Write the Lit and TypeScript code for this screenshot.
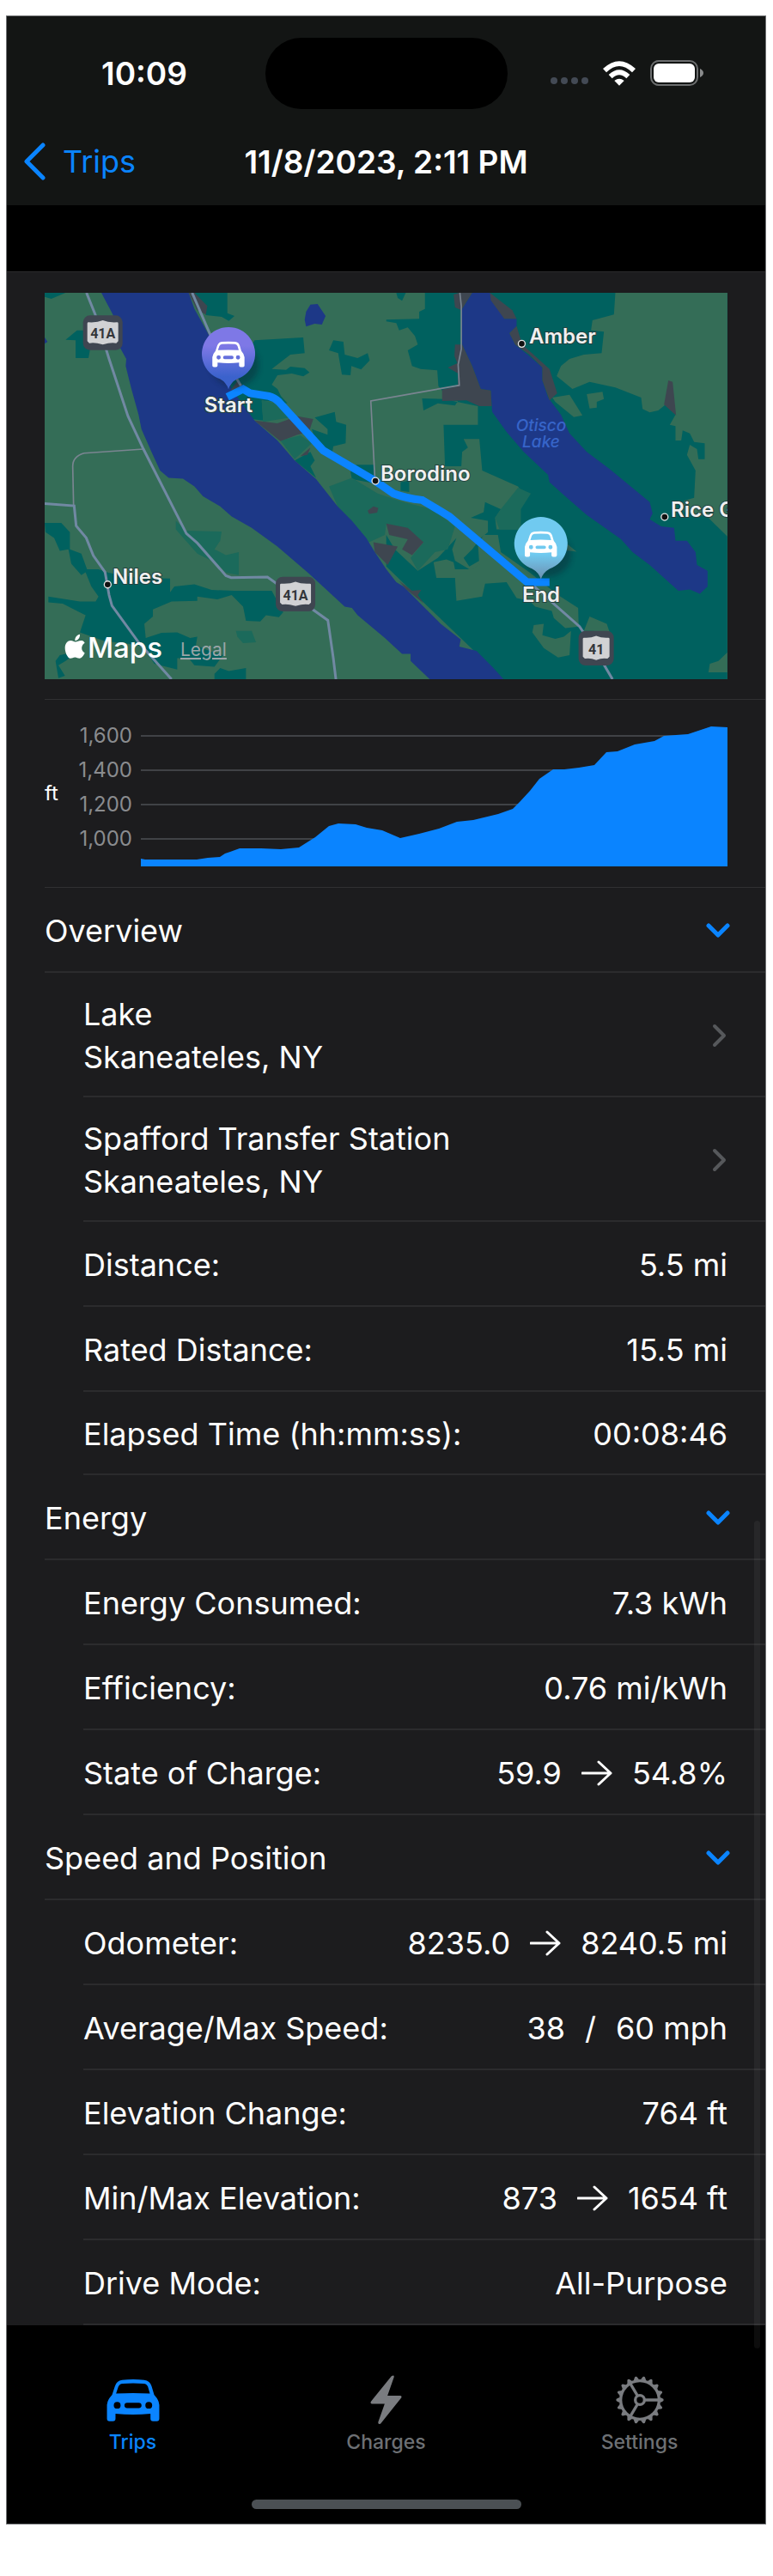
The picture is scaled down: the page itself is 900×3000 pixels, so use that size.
import { css, html, LitElement, nothing, svg } from "lit";
import { customElement, property, state } from "lit/decorators.js";

interface Detail {
  label: string;
  from?: string;
  separator?: "arrow" | "slash";
  value: string;
  compact?: boolean;
}

interface Place {
  name: string;
  city: string;
}

const places: Place[] = [
  { name: "Lake", city: "Skaneateles, NY" },
  { name: "Spafford Transfer Station", city: "Skaneateles, NY" },
];

const overview: Detail[] = [
  { label: "Distance:", value: "5.5 mi" },
  { label: "Rated Distance:", value: "15.5 mi" },
  { label: "Elapsed Time (hh:mm:ss):", value: "00:08:46", compact: true },
];

const energy: Detail[] = [
  { label: "Energy Consumed:", value: "7.3 kWh" },
  { label: "Efficiency:", value: "0.76 mi/kWh" },
  { label: "State of Charge:", from: "59.9", separator: "arrow", value: "54.8%" },
];

const speed: Detail[] = [
  { label: "Odometer:", from: "8235.0", separator: "arrow", value: "8240.5 mi" },
  { label: "Average/Max Speed:", from: "38", separator: "slash", value: "60 mph" },
  { label: "Elevation Change:", value: "764 ft" },
  { label: "Min/Max Elevation:", from: "873", separator: "arrow", value: "1654 ft" },
  { label: "Drive Mode:", value: "All-Purpose" },
];

const carPath =
  "M1 90Q2 72 19 54L29 24Q35 4 54 2Q93-2 132 2Q152 4 158 24L167 54Q184 72 185 90V138Q185 147 176 147H163Q154 147 154 138V121Q93 127 31 121V138Q31 147 22 147H10Q1 147 1 138Z" +
  "M33 50L41 26Q45 16 56 15Q93 12 130 15Q141 16 145 26L152 50Q93 46 33 50Z" +
  "M25 91a12 12 0 1 0 24 0a12 12 0 1 0-24 0Z" +
  "M136 91a12 12 0 1 0 24 0a12 12 0 1 0-24 0Z" +
  "M72 82H113a9 9 0 0 1 0 19H72a9 9 0 0 1 0-19Z";

// 18 teeth around the ring
const gearTeeth = Array.from({ length: 18 }, (_, i) => i * 20);

@customElement("elevation-chart")
class ElevationChart extends LitElement {
  ticks = ["1,600", "1,400", "1,200", "1,000"];

  // profile samples as x, y pairs in plot units
  profile = [
    [0, 163], [5, 164], [65, 164], [78, 162], [92, 161], [98, 157], [104, 155], [115, 151],
    [140, 151], [163, 152], [184, 150], [203, 138], [219, 125], [230, 122], [250, 123], [263, 127],
    [281, 130], [302, 139], [324, 134], [347, 128], [368, 120], [387, 118], [416, 111], [433, 105],
    [441, 97], [453, 84], [464, 70], [480, 59], [493, 59], [510, 57], [528, 54], [542, 39],
    [555, 38], [575, 30], [598, 26], [609, 20], [637, 18], [664, 9], [683, 10],
  ];

  render() {
    const area = this.profile.map(([x, y]) => `${x},${y}`).join(" ");
    return html`
      <span class="unit">ft</span>
      <div class="ticks">${this.ticks.map((tick) => html`<span>${tick}</span>`)}</div>
      <svg viewBox="0 0 683 172" preserveAspectRatio="none" aria-label="Elevation">
        ${[20, 60, 100, 140].map((y) => svg`<path class="grid" d="M0 ${y}H683" />`)}
        <polygon class="area" points="0,172 ${area} 683,172" />
      </svg>
    `;
  }

  static styles = css`
    :host {
      display: flex;
      align-items: center;
      padding: 22px 45px 24px 0;
    }

    .unit {
      width: 36px;
      font-size: 24px;
    }

    .ticks {
      display: flex;
      flex-direction: column;
      width: 66px;
      margin-right: 10px;
      padding-bottom: 12px;
      font-size: 24px;
      line-height: 40px;
      text-align: right;
      color: #8a8c8f;
    }

    svg {
      flex: 1;
      min-width: 0;
      height: 172px;
    }

    .grid {
      stroke: #404246;
      stroke-width: 2;
    }

    .area {
      fill: #0a84ff;
    }
  `;
}

@customElement("trip-map")
class TripMap extends LitElement {
  land() {
    return svg`
      <g class="teal">
        <path d="M37 34H110L60 55L37 48Z" />
        <path d="M150 165H175L195 235L190 262H145V200L110 198Z" />
        <path d="M560 34H675V105L700 115L680 132L655 118L600 112Z" />
        <path d="M770 200L940 190L945 245L895 250L830 300L880 303L895 292L945 297L962 312L940 326L900 316L850 322L830 355L850 370L862 395L885 420L795 410L800 480L760 475L680 360Z" />
        <path d="M980 470L1050 450L1055 485L1090 495L1088 560L1045 570L1040 600L985 560L970 510L1025 530L1025 510Z" />
        <path d="M910 620L965 590L980 620L965 640L985 680Z" />
        <path d="M1105 660L1125 635L1190 635V700L1110 685Z" />
        <path d="M1030 235L1045 200L1080 205L1085 250L1130 262L1165 245L1172 270L1142 302L1108 290L1105 322L1075 320L1062 245Z" />
        <path d="M37 838H95L125 870V930L165 945L185 1000H225L260 1012L360 1030L475 1032V1080L490 1060L560 1052L620 1072L700 1075L830 1075L870 1150L855 1167L810 1160L790 1182L740 1180L730 1130L690 1090L640 1105L570 1095V1110L480 1112L415 1140V1165L385 1190L390 1240L445 1222L500 1220L545 1240L570 1235L565 1265L625 1290L660 1300L630 1340L560 1335L540 1310L500 1310V1350L420 1330L380 1270L330 1260L245 1250L160 1220L180 1160L150 1145L100 1120L50 1115V1095L160 1112L215 1112L225 1095L200 1060L180 1010L165 1020L130 980L120 930L90 935L70 890L40 870Z" />
        <path d="M90 1300L160 1285L110 1320L85 1335L108 1372L85 1380L75 1320Z" />
        <path d="M650 1345L680 1355L740 1345V1384H630V1365Z" />
      </g>
      <g class="teal" transform="translate(1230)">
        <path d="M135 34L135 90L115 100V125L0 128L0 134L35 140L45 165L75 155L100 185L110 215L75 235L90 290L120 300L178 305L182 360L195 375L200 408L250 412L240 428L180 420L130 445L125 403L200 405L320 430V495H200L205 640H262L265 590L285 575L270 545H325L335 655L460 710L480 740L460 790L470 860H385L380 820L400 790L345 765L340 800L295 820L355 830V870L330 890L300 930L270 960L290 990L325 970V1000L290 1000L240 970L230 930L245 890L180 960L110 1005L30 930L0 880V990L410 1384H1191V34Z" />
        <path d="M50 695L80 690V730L50 725Z" />
        <path d="M35 34H68L55 62L40 52Z" />
      </g>
      <g class="mid">
        <path d="M795 410L870 425L905 468L800 485Z" />
        <path d="M860 550L930 532L970 560L910 615Z" />
        <path d="M1030 710L1110 680L1200 735L1290 765L1390 790L1470 850L1445 930L1400 940L1340 1005L1315 960L1360 905L1305 858L1230 840L1225 880L1160 910L1060 780Z" />
        <path d="M495 830L530 865L655 868L650 900L630 930L670 950L715 940V1020L670 1012L640 980L570 945L495 860Z" />
        <path d="M705 1215L760 1215L775 1255L730 1258L710 1235Z" />
        <path d="M1630 790L1690 715L1735 735L1700 790V860H1625L1610 820Z" />
      </g>
      <g class="green" transform="translate(1230)">
        <path d="M800 34L795 110L720 130L715 165L760 170L752 245L690 250L640 265L610 290L595 325L650 370L710 345L800 365L890 400L895 440L920 452L950 445L975 425L1010 460L990 495L1010 500V550H1030L1035 515L1060 525L1075 555L1112 560V615H1090L1085 580L1060 565L1050 600L1080 655L1075 750L1040 760V800L1120 815L1191 885V34Z" />
        <path d="M580 400L640 390L685 462L655 468L590 415Z" />
        <path d="M700 388L755 380L760 405L735 415L735 435L710 438Z" />
        <path d="M165 975L210 965L235 975L240 1000L300 1000L325 985L320 910L340 880L390 880L400 940L500 1010L600 1090L670 1135L672 1200L625 1205L585 1170L578 1145L520 1130L500 1110L455 1100L420 1045L345 1050L335 1095L245 1110L240 1030L175 1030Z" />
        <path d="M515 1195L550 1190L545 1230L590 1243L620 1235L645 1215L640 1300L600 1308L550 1275L510 1220Z" />
        <path d="M710 1165L770 1190L780 1220L720 1215L690 1215Z" />
        <path d="M630 910L665 938L600 930Z" />
        <path d="M1191 1290L1160 1320L1130 1330L1125 1360H1191Z" />
      </g>
      <g class="lake">
        <path d="M235 34H540L560 90L610 180L690 370L740 440L770 480L850 550L910 620L985 685L1060 780L1110 830L1160 890L1190 940L1230 1000L1265 1045L1290 1060L1360 1130L1420 1190L1490 1245L1485 1270L1545 1285L1600 1340L1640 1384H1382L1315 1320V1295H1285L1225 1240L1130 1160L1110 1135L1085 1130L960 1015L850 920L760 855L690 815L650 780L590 745L560 710L520 683L470 680L440 655L410 590L375 510L365 460L340 370L330 330L320 290L322 265L300 225L305 170L270 100Z" />
        <path d="M950 100L965 75L990 73L1018 115L1005 145L980 142L950 152L945 128Z" />
        <path d="M37 190L47 205L37 212Z" />
        <path transform="translate(1230)" d="M300 34H362L412 125H455V150L430 175L450 215L500 255L545 295V340L565 400L610 460L640 525L700 590L780 650L920 765L930 805L920 825L960 850L1005 855L1010 900L1050 900L1080 940L1085 985L1122 1005V1060L1095 1085L1060 1070L1020 1075L920 985L860 940L820 895L700 810L620 740L570 695L565 670L480 590L420 520L370 450L365 375L330 370L300 290L265 215L262 95Z" />
      </g>
      <g class="town">
        <path d="M540 34H560L605 80L600 110L570 95Z" />
        <path d="M685 375L712 340L735 365Z" />
        <path d="M770 480L850 490L920 465L975 475L960 520L920 530L860 552Z" />
        <path d="M930 605L965 575L955 600Z" />
        <path d="M1165 795L1185 780L1202 785L1198 802L1170 806Z" />
        <path d="M1230 840L1305 855L1360 905L1320 950L1285 930L1305 895L1240 880Z" />
        <path d="M1185 905L1270 920L1235 985L1190 940Z" />
        <path d="M1275 1040L1320 1075L1352 1072L1340 1090L1360 1118L1300 1070Z" />
      </g>
      <g class="town" transform="translate(1230)">
        <path d="M235 40L255 34H300L262 95L240 85Z" />
        <path d="M240 215H265L300 290L330 370L365 375L368 430L325 430L280 410L195 412V372L250 360V315L215 295L248 280L238 255Z" />
        <path d="M362 34L440 95L455 125H412L365 60Z" />
        <path d="M430 175L455 150L475 215L570 300L597 385L570 410L545 340V295L500 250L450 215Z" />
        <path d="M985 340L1000 345L1012 462L970 425Z" />
      </g>
    `;
  }

  roads() {
    return svg`
      <g class="minor">
        <path d="M382 580L175 594Q135 605 135 640L138 778" />
        <path d="M1190 680L1176 412L1300 390L1485 357L1481 285L1492 230V80L1487 34" />
      </g>
      <g class="road">
        <path d="M183 34L213 108L262 265L328 465L382 580L532 875L570 908L670 1022L688 1029L815 1027L1026 1178L1045 1310L1054 1384" />
        <path d="M37 770L140 778L147 848L182 890L207 952L248 1010L262 1090L272 1127L365 1255L480 1384" />
        <path d="M552 34L615 180L722 358" />
        <path d="M1735 1050L1905 1200L1965 1290L2020 1384" />
      </g>
      <path class="route" d="M675 398L730 370L755 385L820 395Q840 400 855 415L1010 585L1190 690L1255 735Q1300 752 1355 758L1450 815L1722 1045H1800" />
    `;
  }

  shield(x: number, y: number, width: number, name: string) {
    const half = width / 2;
    return svg`
      <g transform="translate(${x} ${y})">
        <rect class="plate" x=${-half} y="-60" width=${width} height="121" rx="24" />
        <path
          class="badge"
          d="M${15 - half} -32Q${15 - half} -36 ${19 - half} -36Q-20 -34 0 -43Q20 -34 ${half - 19} -36Q${half - 15} -36 ${half - 15} -32V30L${half - 22} 37Q${half - 40} 33 0 42Q${40 - half} 33 ${22 - half} 37L${15 - half} 30Z"
        />
        <g transform="scale(3)"><text class="number" y="7">${name}</text></g>
      </g>
    `;
  }

  pin(x: number, y: number, kind: string) {
    return svg`
      <g transform="translate(${x} ${y})">
        <ellipse class="shadow" cx="22" cy="38" rx="84" ry="78" />
        <path class=${kind} d="M0 124Q-8 100 -30 88A93 93 0 1 1 30 88Q8 100 0 124Z" />
        <path class="car" transform="translate(-57 -43) scale(0.61)" d=${carPath} />
      </g>
    `;
  }

  render() {
    const dots = [[257, 1053], [1192, 691], [1703, 212], [2202, 817]];
    return html`
      <svg viewBox="0 0 795 450" role="img" aria-label="Trip map">
        <defs>
          <linearGradient id="start" x1="0" y1="0" x2="0" y2="1">
            <stop offset="0.3" stop-color="#7e78e6" />
            <stop offset="0.8" stop-color="#3b62cc" />
          </linearGradient>
          <linearGradient id="end" x1="0" y1="0" x2="0" y2="1">
            <stop offset="0.6" stop-color="#70caf0" />
            <stop offset="1" stop-color="#6d8fb0" />
          </linearGradient>
          <filter id="soft"><feGaussianBlur stdDeviation="9" /></filter>
        </defs>
        <g transform="scale(0.3334) translate(-37 -34)">
          <rect class="green" x="37" y="34" width="2390" height="1360" />
          ${this.land()} ${this.roads()}
          ${this.shield(240, 173, 138, "41A")}
          ${this.shield(913, 1086, 138, "41A")}
          ${this.shield(1963, 1275, 123, "41")}
          ${dots.map(([x, y]) => svg`<circle class="dot" cx=${x} cy=${y} r="12" />`)}
          ${this.pin(679, 247, "start")}
          ${this.pin(1770, 910, "end")}
          <path
            class="apple"
            d="M144 1253C152 1253 158 1247 168 1249C172 1250 175 1254 177 1257C162 1267 164 1286 177 1292C173 1301 166 1311 159 1311C152 1311 150 1307 143 1307C136 1307 133 1311 127 1311C117 1311 108 1290 108 1275C108 1259 118 1249 128 1249C135 1249 139 1253 144 1253ZM143 1249C142 1238 150 1229 160 1227C161 1239 153 1248 143 1249Z"
          />
        </g>
        <text class="water" x="578" y="161">Otisco</text>
        <text class="water" x="578" y="180">Lake</text>
        <text class="town-name" x="564" y="59">Amber</text>
        <text class="town-name" x="391" y="219">Borodino</text>
        <text class="town-name" x="79" y="339">Niles</text>
        <text class="town-name" x="729" y="261">Rice Grove</text>
        <text class="pin-name" x="214" y="139">Start</text>
        <text class="pin-name" x="578" y="360">End</text>
        <text class="brand" x="50" y="425">Maps</text>
        <a href="#legal"><text class="legal" x="158" y="423">Legal</text></a>
      </svg>
    `;
  }

  static styles = css`
    :host {
      display: block;
      padding: 24px 45px 23px 0;
    }

    svg {
      display: block;
      width: 100%;
      height: auto;
      overflow: hidden;
      font-family: Inter, "Liberation Sans", sans-serif;
    }

    .green {
      fill: #346d57;
    }

    .teal {
      fill: #00615f;
    }

    .mid {
      fill: #1b6a5b;
    }

    .lake {
      fill: #1d3887;
    }

    .town {
      fill: #3e4650;
    }

    .road,
    .minor,
    .route {
      fill: none;
      stroke: #7189a3;
      stroke-width: 9;
    }

    .minor {
      stroke: #7a8591;
      stroke-width: 5;
    }

    .route {
      stroke: #0b84ff;
      stroke-width: 27;
    }

    .plate {
      fill: #3f4651;
    }

    .badge {
      fill: #d1d2d4;
    }

    .number {
      font-family: "Liberation Sans Narrow", Roboto, sans-serif;
      font-size: 16px;
      font-weight: 700;
      text-anchor: middle;
      fill: #33363a;
    }

    .dot {
      fill: #111;
      stroke: #e4e6e6;
      stroke-width: 4;
    }

    .shadow {
      fill: #102030;
      opacity: 0.4;
      filter: url(#soft);
    }

    .start {
      fill: url(#start);
    }

    .end {
      fill: url(#end);
    }

    .car,
    .apple {
      fill: #fff;
      fill-rule: evenodd;
    }

    .town-name,
    .pin-name {
      font-size: 24px;
      font-weight: 600;
      fill: #f0f0f0;
      stroke: #24423f;
      stroke-width: 2;
      paint-order: stroke;
    }

    .pin-name {
      text-anchor: middle;
    }

    .water {
      font-size: 19px;
      font-style: italic;
      font-weight: 500;
      text-anchor: middle;
      fill: #3765c9;
    }

    .brand {
      font-size: 33px;
      font-weight: 500;
      fill: #fff;
    }

    .legal {
      font-size: 21px;
      text-decoration: underline;
      fill: #9aa5a8;
    }
  `;
}

@customElement("detail-section")
class DetailSection extends LitElement {
  @property()
  heading = "";

  @property({ attribute: false })
  places: Place[] = [];

  @property({ attribute: false })
  details: Detail[] = [];

  @state()
  isOpen = true;

  handleToggle() {
    this.isOpen = !this.isOpen;
  }

  renderSeparator(detail: Detail) {
    if (detail.separator === "arrow") {
      return html`<svg class="arrow" viewBox="0 0 36 30" aria-label="to">
        <path d="M1 15H34M20 2L34 15L20 28" />
      </svg>`;
    }
    return detail.separator === "slash" ? html`<span class="slash">/</span>` : nothing;
  }

  renderBody() {
    return html`
      ${this.places.map(
        (place) => html`
          <a class="row place" href="#place">
            <span>${place.name}<br />${place.city}</span>
            <svg class="disclosure" viewBox="0 0 18 28"><path d="M3 3L14 14L3 25" /></svg>
          </a>
        `
      )}
      <dl>
        ${this.details.map(
          (detail) => html`
            <div class="row ${detail.compact ? "compact" : ""}">
              <dt>${detail.label}</dt>
              <dd>
                ${detail.from ? html`<span>${detail.from}</span>` : nothing}
                ${this.renderSeparator(detail)}
                <span>${detail.value}</span>
              </dd>
            </div>
          `
        )}
      </dl>
    `;
  }

  render() {
    return html`
      <button class="heading" aria-expanded=${this.isOpen} @click=${this.handleToggle}>
        ${this.heading}
        <svg class="chevron" viewBox="0 0 28 18"><path d="M3 3L14 14L25 3" /></svg>
      </button>
      ${this.isOpen ? this.renderBody() : nothing}
    `;
  }

  static styles = css`
    :host {
      display: block;
    }

    .heading,
    .row {
      display: flex;
      align-items: center;
      justify-content: space-between;
      box-sizing: border-box;
      min-height: 99px;
      padding: 2px 45px 0 0;
      border: 0;
      border-bottom: 2px solid #2b2b2d;
      color: #fff;
      font: inherit;
    }

    .heading {
      width: 100%;
      background: none;
      text-align: left;
      cursor: pointer;
    }

    .row {
      margin-left: 45px;
    }

    .place {
      min-height: 145px;
      line-height: 50px;
      text-decoration: none;
    }

    .compact {
      min-height: 97px;
    }

    dl,
    dd {
      margin: 0;
    }

    dd {
      display: flex;
      align-items: center;
      gap: 23px;
    }

    svg {
      fill: none;
      stroke: #fff;
      stroke-width: 3;
      stroke-linecap: round;
      stroke-linejoin: round;
    }

    .arrow {
      width: 36px;
      height: 30px;
    }

    .chevron {
      width: 28px;
      height: 18px;
      margin-right: -3px;
      stroke: #0a84ff;
      stroke-width: 5;
    }

    .disclosure {
      width: 18px;
      height: 28px;
      stroke: #56585b;
      stroke-width: 4;
    }
  `;
}

@customElement("app-root")
class AppRoot extends LitElement {
  @state()
  tab = "Trips";

  renderStatusBar() {
    return html`
      <div class="status">
        <time>10:09</time>
        <div class="island"></div>
        <div class="indicators">
          <svg class="signal" viewBox="0 0 44 8">
            <circle cx="4" cy="4" r="4" />
            <circle cx="16" cy="4" r="4" />
            <circle cx="28" cy="4" r="4" />
            <circle cx="40" cy="4" r="4" />
          </svg>
          <svg class="wifi" viewBox="0 0 114 87">
            <path d="M57 86L40 69Q57 55 74 69Z" />
            <path d="M32 61L20 48Q57 14 94 48L82 61Q57 37 32 61Z" />
            <path d="M12 40L0 27Q57 -26 114 27L102 40Q57 -4 12 40Z" />
          </svg>
          <svg class="battery" viewBox="0 0 62 30">
            <rect class="case" x="1" y="1" width="54" height="28" rx="9" />
            <rect x="4" y="4" width="48" height="22" rx="6" />
            <path class="nub" d="M58 10Q62 12 62 15Q62 18 58 20Z" />
          </svg>
        </div>
      </div>
    `;
  }

  renderIcon(name: string) {
    if (name === "Trips") {
      return html`<svg class="car" viewBox="0 0 186 148"><path d=${carPath} /></svg>`;
    }
    if (name === "Charges") {
      return html`<svg class="bolt" viewBox="0 0 112 174">
        <path
          d="M84 6L61 72H107Q113 74 109 80L37 170Q28 175 28 166L51 101H5Q-1 98 3 92L75 3Q85-3 84 6Z"
        />
      </svg>`;
    }
    return html`<svg class="gear" viewBox="-84 -84 168 168">
      <circle class="line" r="67" />
      <circle class="line" r="16" />
      <path class="line" d="M18 0H66M-9 -16L-34 -58M-9 16L-34 58" />
      ${gearTeeth.map(
        (angle) =>
          svg`<path transform="rotate(${angle})" d="M70 -10L79 -5Q83 -4 83 0Q83 4 79 5L70 10Z" />`
      )}
    </svg>`;
  }

  render() {
    return html`
      <div class="screen">
        <header>
          ${this.renderStatusBar()}
          <nav class="titlebar">
            <a class="back" href="#trips">
              <svg viewBox="0 0 26 44"><path d="M23 3L4 22L23 41" /></svg>
              Trips
            </a>
            <h1>11/8/2023, 2:11 PM</h1>
          </nav>
        </header>
        <main>
          <trip-map></trip-map>
          <elevation-chart></elevation-chart>
          <detail-section heading="Overview" .places=${places} .details=${overview}></detail-section>
          <detail-section heading="Energy" .details=${energy}></detail-section>
          <detail-section heading="Speed and Position" .details=${speed}></detail-section>
        </main>
        <footer>
          <nav class="tabs">
            ${["Trips", "Charges", "Settings"].map(
              (name) => html`
                <button
                  class="tab ${this.tab === name ? "active" : ""}"
                  @click=${() => (this.tab = name)}
                >
                  <span class="icon">${this.renderIcon(name)}</span>
                  ${name}
                </button>
              `
            )}
          </nav>
          <div class="home"></div>
        </footer>
        <div class="scrollbar"></div>
      </div>
    `;
  }

  static styles = css`
    :host {
      display: block;
      padding: 18px 8px 60px 7px;
      background: #fff;
      color: #fff;
      font-family: Inter, "Liberation Sans", sans-serif;
      font-size: 36px;
    }

    .screen {
      position: relative;
      background: #000;
      outline: 1px solid #6f7173;
      outline-offset: -1px;
    }

    header {
      padding-top: 15px;
      background: #131514;
    }

    .status,
    .titlebar {
      display: grid;
      grid-template-columns: 1fr auto 1fr;
      align-items: center;
    }

    .status {
      height: 104px;
      font-weight: 600;
    }

    .status time {
      padding-left: 111px;
      font-size: 37px;
    }

    .island {
      width: 282px;
      height: 83px;
      border-radius: 42px;
      background: #000;
    }

    .indicators {
      display: flex;
      align-items: center;
      justify-content: flex-end;
      gap: 17px;
      padding-right: 73px;
      fill: #fff;
    }

    .signal {
      width: 44px;
      height: 8px;
      margin-top: 18px;
      fill: #434a55;
    }

    .wifi {
      width: 38px;
      height: 29px;
    }

    .battery {
      width: 62px;
      height: 30px;
    }

    .case {
      fill: none;
      stroke: #6c6e6f;
      stroke-width: 2;
    }

    .nub {
      fill: #8a8c8d;
    }

    .titlebar {
      height: 102px;
    }

    .back {
      display: flex;
      align-items: center;
      gap: 20px;
      padding-left: 20px;
      color: #0a84ff;
      text-decoration: none;
    }

    .back svg {
      width: 26px;
      height: 44px;
      fill: none;
      stroke: #0a84ff;
      stroke-width: 5;
      stroke-linecap: round;
      stroke-linejoin: round;
    }

    h1 {
      margin: 0;
      font-size: 37px;
      font-weight: 600;
    }

    main {
      margin-top: 77px;
      padding-left: 45px;
      background: #1c1c1e;
      border-top: 1px solid #2b2b2d;
    }

    trip-map,
    elevation-chart {
      border-bottom: 1px solid #303032;
    }

    footer {
      display: flex;
      flex-direction: column;
      align-items: center;
      padding-bottom: 18px;
    }

    .tabs {
      display: grid;
      grid-template-columns: repeat(3, 1fr);
      width: 100%;
      padding-top: 56px;
    }

    .tab {
      display: flex;
      flex-direction: column;
      align-items: center;
      gap: 4px;
      padding: 0;
      border: 0;
      background: none;
      color: #6d7074;
      font: inherit;
      font-size: 23px;
      font-weight: 500;
      line-height: 28px;
      cursor: pointer;
    }

    .icon {
      display: flex;
      align-items: center;
      height: 62px;
      fill: #7a7c80;
    }

    .active,
    .active .icon {
      color: #0a84ff;
      fill: #0a84ff;
    }

    .car {
      width: 62px;
      height: 49px;
      fill-rule: evenodd;
    }

    .bolt {
      width: 37px;
      height: 58px;
    }

    .gear {
      width: 56px;
      height: 56px;
    }

    .line {
      fill: none;
      stroke: #7a7c80;
      stroke-width: 10;
    }

    .home {
      width: 314px;
      height: 11px;
      margin-top: 53px;
      border-radius: 6px;
      background: #4b5054;
    }

    .scrollbar {
      position: absolute;
      top: 60%;
      right: 7px;
      bottom: 7%;
      width: 7px;
      border-radius: 4px;
      background: rgba(255, 255, 255, 0.05);
    }
  `;
}

export { AppRoot, DetailSection, ElevationChart, TripMap };
